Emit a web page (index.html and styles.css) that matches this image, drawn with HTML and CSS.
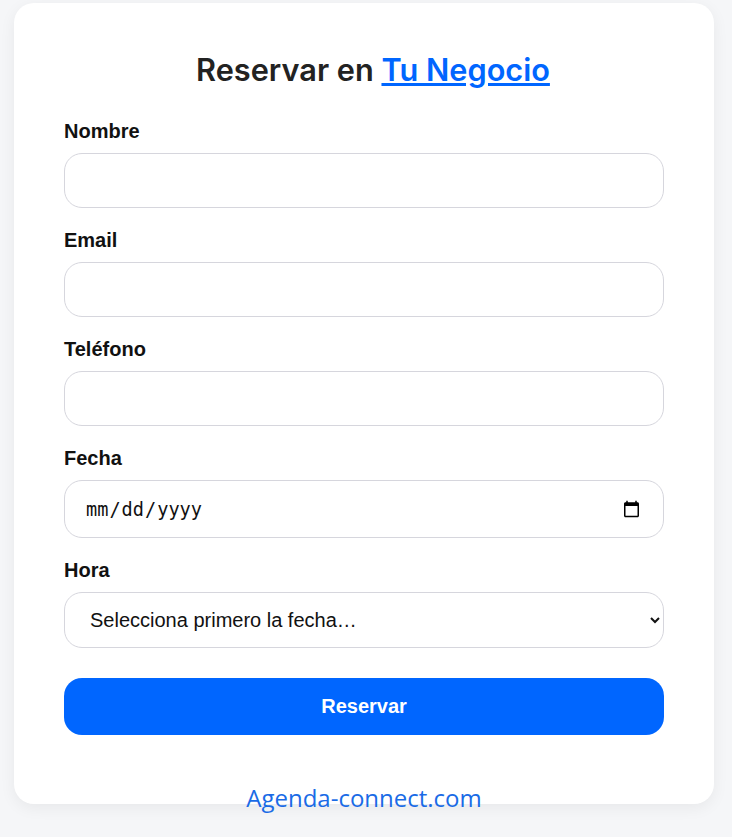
FILE: index.html
```html
<!DOCTYPE html>
<html lang="es">
<head>
<meta charset="utf-8">
<title>Reservar en Tu Negocio</title>
<link rel="stylesheet" href="styles.css">
</head>
<body>
<main class="card">
  <h1 class="title">Reservar en <a href="#" class="biz">Tu Negocio</a></h1>
  <form class="form">
    <div class="group">
      <label class="label" for="nombre">Nombre</label>
      <input class="field" id="nombre" type="text">
    </div>
    <div class="group">
      <label class="label" for="email">Email</label>
      <input class="field" id="email" type="email">
    </div>
    <div class="group">
      <label class="label" for="tel">Teléfono</label>
      <input class="field" id="tel" type="tel">
    </div>
    <div class="group">
      <label class="label" for="fecha">Fecha</label>
      <input class="field field-date" id="fecha" type="date">
    </div>
    <div class="group">
      <label class="label" for="hora">Hora</label>
      <select class="field field-select" id="hora">
        <option>Selecciona primero la fecha…</option>
      </select>
    </div>
    <button type="button" class="submit">Reservar</button>
  </form>
  <a href="#" class="footer-link">Agenda-connect.com</a>
</main>
</body>
</html>
```

FILE: styles.css
```css
html, body {
  margin: 0;
  padding: 0;
  background: #f5f6f8;
}
body {
  padding: 3px 18px 30px 14px;
  font-family: "Liberation Sans", Arial, sans-serif;
}
.card {
  position: relative;
  width: 700px;
  box-sizing: border-box;
  background: #fff;
  border-radius: 20px;
  box-shadow: 0 4px 16px rgba(0, 0, 0, 0.06);
  padding: 50px 50px 69px;
}
.title {
  margin: 0 0 33px;
  padding-left: 18px;
  text-align: center;
  font-family: Inter, sans-serif;
  font-weight: 600;
  font-size: 30.7px;
  line-height: 34px;
  color: #222;
}
.biz {
  color: #0066ff;
  text-decoration: underline;
}
.form {
  display: flex;
  flex-direction: column;
}
.group {
  display: flex;
  flex-direction: column;
  margin-bottom: 21px;
}
.label {
  font-family: "Liberation Sans", Arial, sans-serif;
  font-weight: 700;
  font-size: 20px;
  line-height: 22px;
  color: #111;
  margin-bottom: 11px;
}
.field {
  box-sizing: border-box;
  width: 100%;
  height: 55px;
  border: 1px solid #d6d6dd;
  border-radius: 18px;
  padding: 0 20px;
  background: #fff;
  font-family: "Liberation Sans", Arial, sans-serif;
  font-size: 20px;
  color: #111;
  outline: none;
}
.field-date {
  height: 58px;
  font-family: "DejaVu Sans Mono", monospace;
  font-size: 18.6px;
}
.field-select {
  height: 56px;
  padding: 0 14px 0 21px;
  font-size: 20px;
}
.group:last-of-type {
  margin-bottom: 30px;
}
.submit {
  height: 57px;
  border: none;
  border-radius: 18px;
  background: #0066ff;
  color: #fff;
  font-family: "Liberation Sans", Arial, sans-serif;
  font-weight: 700;
  font-size: 20px;
  cursor: pointer;
}
.footer-link {
  position: absolute;
  left: 0;
  right: 0;
  top: 778px;
  text-align: center;
  font-family: "Open Sans", sans-serif;
  font-size: 24px;
  line-height: 34px;
  color: #1a6be6;
  text-decoration: none;
}
```
